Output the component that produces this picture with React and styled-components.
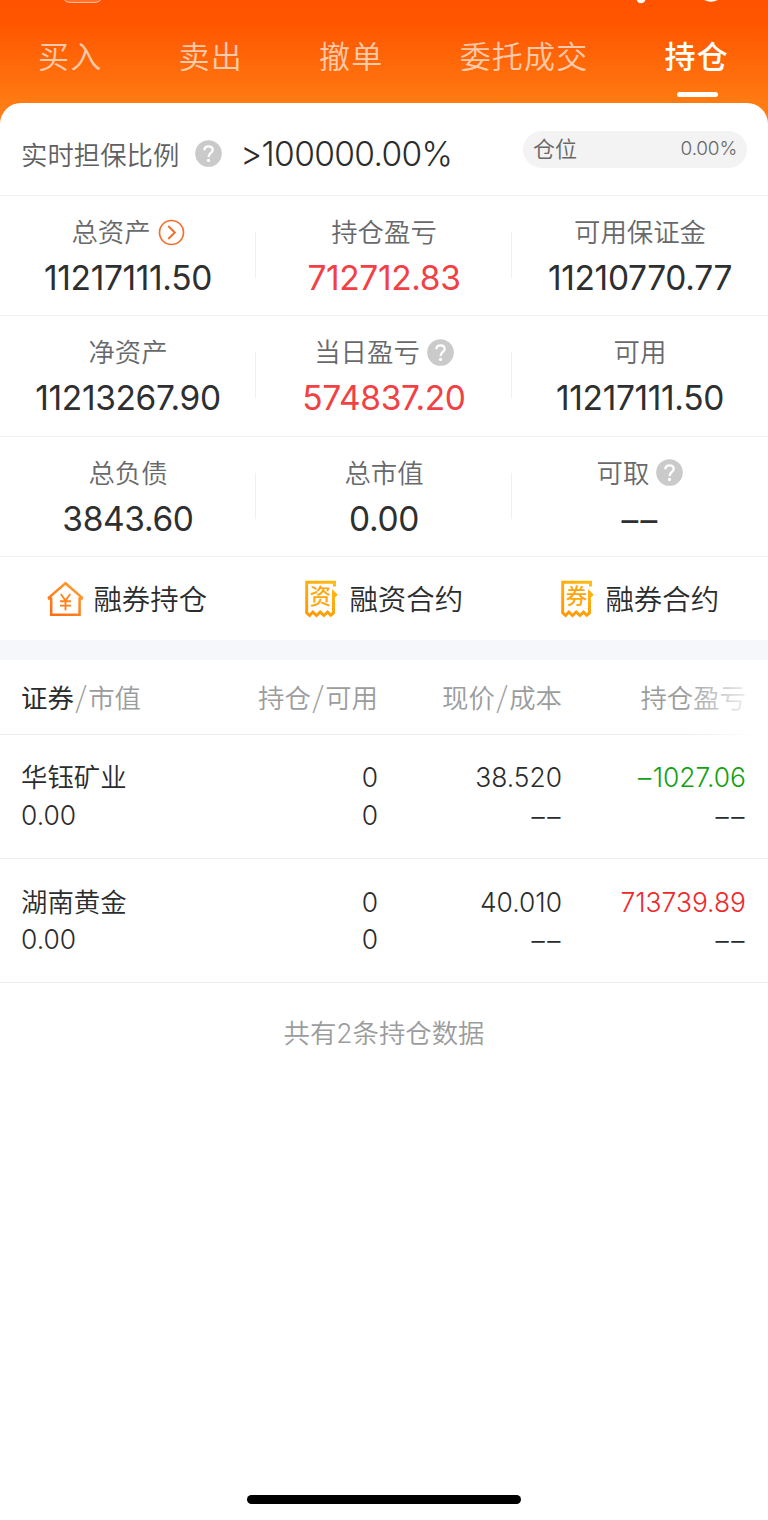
import React from "react";
import styled, { createGlobalStyle } from "styled-components";

const GlobalStyle = createGlobalStyle`
  body {
    margin: 0;
    background: #fff;
    font-family: Inter, "Noto Sans CJK SC", sans-serif;
    font-weight: 350;
    color: #2b2c2d;
  }
`;

const Page = styled.div`
  width: 768px;
  height: 1520px;
  overflow: hidden;
  display: flex;
  flex-direction: column;
  background: linear-gradient(#ff5300 0, #ff5500 22px, #ff7b12 103px, #ff8018 125px);
`;

const StatusBar = styled.div`
  height: 12px;
  flex: none;

  svg {
    display: block;
  }
`;

const Tabs = styled.nav`
  display: flex;
  justify-content: space-between;
  height: 91px;
  flex: none;
  padding: 0 39px 0 38px;
  box-sizing: border-box;
`;

const Tab = styled.div`
  display: flex;
  flex-direction: column;
  align-items: center;
  padding-top: 24px;
  font-size: 31px;
  line-height: 42px;
  letter-spacing: 1.2px;
  font-weight: ${(p) => (p.$active ? 500 : 350)};
  color: ${(p) => (p.$active ? "#fff" : "rgba(255, 255, 255, 0.68)")};
`;

const Underline = styled.span`
  width: 41px;
  height: 5px;
  margin: 14px 0 0 2px;
  border-radius: 3px;
  background: #fff;
`;

const Card = styled.main`
  flex: 1;
  display: flex;
  flex-direction: column;
  background: #fff;
  border-radius: 21px 21px 0 0;
`;

const RatioRow = styled.section`
  height: 93px;
  display: flex;
  align-items: center;
  padding: 9px 21px 0;
  box-sizing: border-box;
  border-bottom: 1px solid #f0f0f0;
`;

const RatioLabel = styled.span`
  font-size: 26.4px;
  color: #5f6062;
  margin-right: 16px;
`;

const RatioValue = styled.span`
  font-size: 33.5px;
  letter-spacing: -0.65px;
  margin-left: 18px;
`;

const Position = styled.div`
  width: 224px;
  height: 37px;
  margin: -9px 0 0 auto;
  padding: 0 10px;
  box-sizing: border-box;
  display: flex;
  align-items: center;
  justify-content: space-between;
  border-radius: 19px;
  background: #f3f3f3;
  color: #666768;
`;

const PositionLabel = styled.span`
  font-size: 22px;
  margin-top: -4px;
`;

const PositionValue = styled.span`
  font-size: 19px;
  letter-spacing: -0.2px;
  margin-top: -2px;
`;

const StatsRow = styled.section`
  display: grid;
  grid-template-columns: repeat(3, 256px);
  height: 120.3px;
  box-sizing: border-box;
  border-bottom: 1px solid #f0f0f0;
`;

const Stat = styled.div`
  display: flex;
  flex-direction: column;
  align-items: center;
  padding-top: 18px;
  background: linear-gradient(#f0f0f0, #f0f0f0) 100% 36px / ${(p) => (p.$last ? 0 : 1)}px 46px no-repeat;
`;

const StatLabel = styled.div`
  display: flex;
  align-items: center;
  gap: 7px;
  height: 36px;
  font-size: 26.4px;
  color: #68696b;
`;

const LabelText = styled.span`
  margin-top: -3px;
`;

const StatValue = styled.div`
  height: 40px;
  line-height: 40px;
  margin-top: 8px;
  font-size: 33.5px;
  font-weight: 400;
  letter-spacing: -0.35px;
  white-space: nowrap;
  color: ${(p) => (p.$gain ? "#f24144" : "#2e2f30")};
`;

const Links = styled.section`
  display: grid;
  grid-template-columns: repeat(3, 256px);
  height: 83px;
`;

const LinkItem = styled.div`
  display: flex;
  align-items: center;
  justify-content: center;
  gap: 9.5px;
  font-size: 28.4px;
  padding: 2px 3px 0 0;
`;

const Divider = styled.div`
  height: 20px;
  background: #f6f7fa;
`;

const HeadRow = styled.div`
  position: relative;
  display: grid;
  grid-template-columns: 180px 177px 184px 184px;
  align-items: center;
  height: 75px;
  padding: 0 22px 1px 21px;
  box-sizing: border-box;
  border-bottom: 1px solid #ececec;
  font-size: 26.4px;
  color: #9b9c9d;

  &::after {
    content: "";
    position: absolute;
    top: 0;
    right: 0;
    bottom: -1px;
    width: 84px;
    background: linear-gradient(90deg, rgba(255, 255, 255, 0), #fff 90%);
  }
`;

const Row = styled.div`
  display: grid;
  grid-template-columns: 180px 177px 184px 184px;
  height: 124.3px;
  padding: 24.5px 22px 0 21px;
  box-sizing: border-box;
  border-bottom: 1px solid #ececec;
  font-size: 26.4px;
`;

const Cell = styled.div`
  text-align: ${(p) => (p.$left ? "left" : "right")};
  white-space: nowrap;
`;

const Line = styled.div`
  height: 37.5px;
  line-height: 37.5px;
  color: ${(p) => p.$color || "#2b2c2d"};
`;

const Strong = styled.span`
  color: #2b2c2d;
  font-weight: 400;
`;

const Slash = styled.span`
  font-family: "Noto Sans CJK SC", sans-serif;
  font-weight: 300;
  font-size: 29px;
  line-height: 30px;
  padding: 0 1.5px;
`;

const Dash = styled.span`
  display: inline-block;
  margin-left: ${(p) => (p.$last ? 2.5 : 0)}px;
  margin-right: ${(p) => (p.$minus || p.$last ? 1.5 : 0)}px;
  transform: translateY(${(p) => (p.$minus ? 0 : 1)}px);
`;

const Summary = styled.p`
  margin: 30px 0 0;
  text-align: center;
  font-size: 26.4px;
  line-height: 40px;
  color: #9b9c9d;
`;

const HomeIndicator = styled.div`
  width: 274px;
  height: 9px;
  margin: auto auto 16px;
  border-radius: 5px;
  background: #000;
`;

const HelpIcon = () => (
  <svg width="27" height="27" viewBox="0 0 27 27" fill="none">
    <circle cx="13.5" cy="13.5" r="13.3" fill="#cacaca" />
    <path d="M9.3 10.3C9.4 7.6 11.1 6.3 13.5 6.3s4.2 1.4 4.2 3.7c0 3-4.1 3.1-4.1 6.9" stroke="#fff" strokeWidth="2.3" />
    <circle cx="13.5" cy="20.4" r="1.6" fill="#fff" />
  </svg>
);

const ArrowIcon = () => (
  <svg width="27" height="27" viewBox="0 0 27 27" fill="none" stroke="#f2702f">
    <circle cx="13.5" cy="13.5" r="12" strokeWidth="1.7" />
    <path d="M10.3 7l6.5 6.5-6.5 6.5" strokeWidth="2" />
  </svg>
);

const HouseIcon = () => (
  <svg width="38" height="38" viewBox="0 0 38 38" fill="none" stroke="url(#house)">
    <defs>
      <linearGradient id="house" gradientUnits="userSpaceOnUse" x1="32" y1="2" x2="8" y2="36">
        <stop stopColor="#ffa02e" />
        <stop offset="1" stopColor="#ff6d14" />
      </linearGradient>
    </defs>
    <path d="M2 18.6h3.2v16.2h28.4V18.6h3.2M2 18.4L19.5 3.2l17.3 15.2" strokeWidth="2.5" />
    <path d="M14.8 14l4.7 6.6 4.7-6.6M19.5 20.5v9.8M14 21.2h11M14 25.6h11" strokeWidth="1.9" />
  </svg>
);

const ReceiptChar = styled.text`
  font-family: "Noto Sans CJK SC", sans-serif;
  font-size: 21.5px;
  font-weight: 500;
  stroke: none;
`;

const ReceiptIcon = ({ char }) => (
  <svg width="38" height="38" viewBox="0 0 38 38" fill="none">
    <defs>
      <linearGradient id="receipt" gradientUnits="userSpaceOnUse" x1="30" y1="0" x2="8" y2="38">
        <stop stopColor="#ffbb11" />
        <stop offset="1" stopColor="#ff9500" />
      </linearGradient>
    </defs>
    <path
      d="M32.5 6.5V2.2H4.7v30.6l2.9 2.7 3.2-3.5 3.7 3.5 3.7-3.5 3.7 3.5 3.7-3.5 3.2 3.2 2.7-2.3V12.5l2.2 2.2-2.2 2"
      stroke="url(#receipt)"
      strokeWidth="2.9"
    />
    <ReceiptChar x="18.6" y="24.3" textAnchor="middle" fill="#ffa70a">
      {char}
    </ReceiptChar>
  </svg>
);

const NoData = () => (
  <>
    <Dash>–</Dash>
    <Dash $last>–</Dash>
  </>
);

const tabs = ["买入", "卖出", "撤单", "委托成交", "持仓"];

const stats = [
  [
    { label: "总资产", value: "11217111.50", icon: <ArrowIcon /> },
    { label: "持仓盈亏", value: "712712.83", gain: true },
    { label: "可用保证金", value: "11210770.77" },
  ],
  [
    { label: "净资产", value: "11213267.90" },
    { label: "当日盈亏", value: "574837.20", gain: true, icon: <HelpIcon /> },
    { label: "可用", value: "11217111.50" },
  ],
  [
    { label: "总负债", value: "3843.60" },
    { label: "总市值", value: "0.00" },
    { label: "可取", value: null, icon: <HelpIcon /> },
  ],
];

const links = [
  { label: "融券持仓", icon: <HouseIcon /> },
  { label: "融资合约", icon: <ReceiptIcon char="资" /> },
  { label: "融券合约", icon: <ReceiptIcon char="券" /> },
];

const holdings = [
  { name: "华钰矿业", price: "38.520", profit: "1027.06", loss: true },
  { name: "湖南黄金", price: "40.010", profit: "713739.89" },
];

const App = () => {
  return (
    <Page>
      <GlobalStyle />
      <StatusBar>
        <svg width="768" height="12" fill="none">
          <rect x="62" y="-20" width="41" height="22.4" rx="8" fill="#fff" fillOpacity="0.15" stroke="#ffc6a8" />
          <circle cx="641" cy="-1.3" r="4.5" fill="#fff" />
          <circle cx="711" cy="-12" r="12.5" stroke="#fff" strokeWidth="2.5" />
        </svg>
      </StatusBar>
      <Tabs>
        {tabs.map((tab) => (
          <Tab key={tab} $active={tab === "持仓"}>
            {tab}
            {tab === "持仓" && <Underline />}
          </Tab>
        ))}
      </Tabs>
      <Card>
        <RatioRow>
          <RatioLabel>实时担保比例</RatioLabel>
          <HelpIcon />
          <RatioValue>&gt;100000.00%</RatioValue>
          <Position>
            <PositionLabel>仓位</PositionLabel>
            <PositionValue>0.00%</PositionValue>
          </Position>
        </RatioRow>
        {stats.map((row, i) => (
          <StatsRow key={i}>
            {row.map((item, j) => (
              <Stat key={item.label} $last={j === 2}>
                <StatLabel>
                  <LabelText>{item.label}</LabelText>
                  {item.icon}
                </StatLabel>
                <StatValue $gain={item.gain}>{item.value || <NoData />}</StatValue>
              </Stat>
            ))}
          </StatsRow>
        ))}
        <Links>
          {links.map((link) => (
            <LinkItem key={link.label}>
              {link.icon}
              <LabelText>{link.label}</LabelText>
            </LinkItem>
          ))}
        </Links>
        <Divider />
        <HeadRow>
          <Cell $left>
            <Strong>证券</Strong>
            <Slash>/</Slash>市值
          </Cell>
          <Cell>
            持仓<Slash>/</Slash>可用
          </Cell>
          <Cell>
            现价<Slash>/</Slash>成本
          </Cell>
          <Cell>持仓盈亏</Cell>
        </HeadRow>
        {holdings.map((item) => (
          <Row key={item.name}>
            <Cell $left>
              <Line>{item.name}</Line>
              <Line>0.00</Line>
            </Cell>
            <Cell>
              <Line>0</Line>
              <Line>0</Line>
            </Cell>
            <Cell>
              <Line>{item.price}</Line>
              <Line>
                <NoData />
              </Line>
            </Cell>
            <Cell>
              <Line $color={item.loss ? "#12a112" : "#ee282c"}>
                {item.loss && <Dash $minus>–</Dash>}
                {item.profit}
              </Line>
              <Line>
                <NoData />
              </Line>
            </Cell>
          </Row>
        ))}
        <Summary>共有2条持仓数据</Summary>
        <HomeIndicator />
      </Card>
    </Page>
  );
};

export default App;
